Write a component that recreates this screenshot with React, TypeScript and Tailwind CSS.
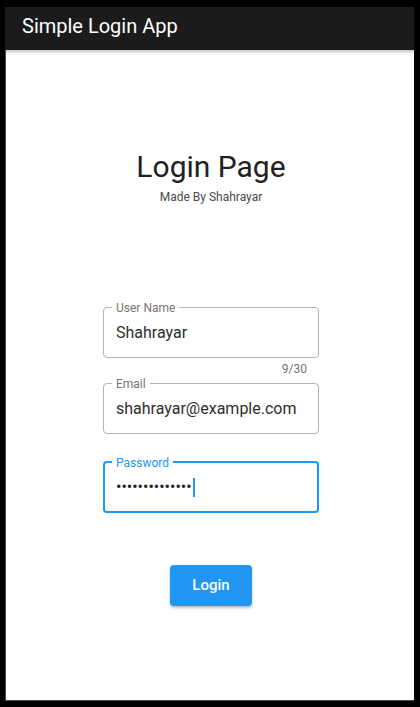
import React from 'react';

const font = { fontFamily: 'Roboto, "Noto Sans", sans-serif' };

const OutlinedField: React.FC<{ label: string; value: string; className?: string }> = ({ label, value, className }) => (
  <fieldset className={`w-[216px] rounded-[4px] border border-[#b3b3b3] px-2 pb-[8px] ${className ?? ''}`}>
    <legend className="px-1 text-[12px] leading-4 text-[#757575]">
      <span className="relative top-[1px]">{label}</span>
    </legend>
    <input
      readOnly
      value={value}
      className="block h-[34px] w-full bg-transparent px-1 text-[16px] text-[#2e2e2e] outline-none"
    />
  </fieldset>
);

export default function App() {
  return (
    <div className="h-[707px] w-[420px] bg-black pt-[7px] pl-[5px] pr-[6px] pb-[6px]" style={font}>
      <div className="flex h-full flex-col">
        <header className="relative z-10 flex h-[43px] shrink-0 items-start bg-[#1b1b1b] pl-[17px] pt-[5px] shadow-[0_2px_3px_rgba(0,0,0,0.25)]">
          <h1 className="text-[20px] leading-7 text-white">Simple Login App</h1>
        </header>

        <main className="flex flex-1 flex-col items-center border-l border-b border-[#4a4a4a] bg-white pl-[2px]">
          <h2 className="mt-[99px] text-[30px] leading-9 text-[#212121]">Login Page</h2>
          <p className="mt-1 text-[12px] leading-4 text-[#4a4a4a]">Made By Shahrayar</p>

          <OutlinedField className="mt-[94px]" label="User Name" value="Shahrayar" />
          <div className="mt-[3px] w-[216px] pr-3 text-right text-[12px] leading-4 text-[#757575]">9/30</div>
          <OutlinedField className="mt-[-2px]" label="Email" value="shahrayar@example.com" />

          {/* focused password field */}
          <fieldset className="mt-[20px] w-[216px] rounded-[4px] border-2 border-[#2196f3] px-[7px] pb-[7px]">
            <legend className="px-1 text-[12px] leading-4 text-[#2196f3]">
              <span className="relative top-[1px]">Password</span>
            </legend>
            <div className="flex h-[34px] items-center px-1 text-[16px] text-[#212121]">
              <span>••••••••••••••</span>
              <span className="ml-[1px] h-[19px] w-[2px] bg-[#2196f3]" />
            </div>
          </fieldset>

          <button className="mt-[52px] h-[41px] w-[82px] rounded-[4px] bg-[#2196f3] text-[15px] font-medium text-white shadow-[0_2px_3px_rgba(0,0,0,0.25)]">
            Login
          </button>
        </main>
      </div>
    </div>
  );
}
